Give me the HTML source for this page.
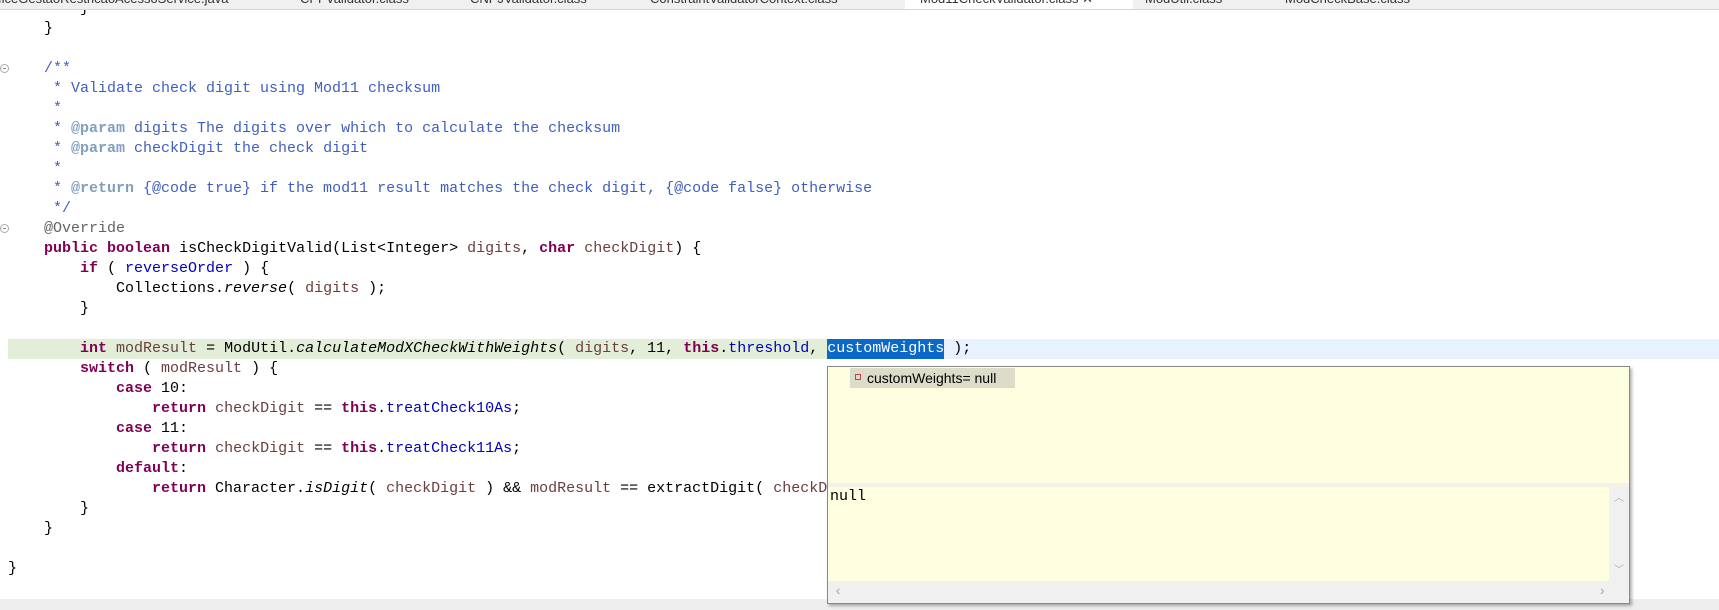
<!DOCTYPE html>
<html><head><meta charset="utf-8"><style>
body{margin:0;width:1719px;height:610px;background:#fff;position:relative;overflow:hidden;font-family:"Liberation Mono",monospace;font-size:15px;}
.tabs{position:absolute;left:0;top:0;width:1719px;height:9px;background:#f0f0f0;border-bottom:1px solid #d8d8d8;overflow:hidden;font-family:"Liberation Sans",sans-serif;font-size:13px;color:#333;z-index:2}
.tabs span{position:absolute;top:-9px;white-space:nowrap}
.l{position:absolute;left:8px;height:20px;line-height:20px;white-space:pre;color:#000}
.k{color:#7f0055;font-weight:bold}.c{color:#3f5fbf}.t{color:#7f9fbf;font-weight:bold}
.f{color:#0000c0}.v{color:#6a3e3e}.i{font-style:italic}.a{color:#646464}
.fold{position:absolute;left:0;width:7px;height:7px;border:1px solid #aaa;border-radius:50%}
.fold:after{content:"";position:absolute;left:2px;top:3px;width:3px;height:1px;background:#888}
</style></head><body>
<div class="tabs">
<span style="left:-2px">ficeGestaoRestricaoAcessoService.java</span>
<span style="left:300px">CPFValidator.class</span>
<span style="left:470px">CNPJValidator.class</span>
<span style="left:650px">ConstraintValidatorContext.class</span>
<div style="position:absolute;left:905px;top:0;width:228px;height:9px;background:#fff"></div>
<span style="left:920px">Mod11CheckValidator.class ✕</span>
<span style="left:1145px">ModUtil.class</span>
<span style="left:1285px">ModCheckBase.class</span>
</div>
<div class="fold" style="top:64px"></div>
<div class="fold" style="top:224px"></div>
<div style="position:absolute;left:8px;top:339px;width:819px;height:20px;background:#e2eed7"></div>
<div style="position:absolute;left:827px;top:339px;width:892px;height:20px;background:#e8f2fe"></div>
<div style="position:absolute;left:827px;top:339px;width:117px;height:20px;background:#0b68c9"></div>
<div class="l" style="top:-1px">        }</div>
<div class="l" style="top:19px">    }</div>
<div class="l c" style="top:59px">    /**</div>
<div class="l c" style="top:79px">     * Validate check digit using Mod11 checksum</div>
<div class="l c" style="top:99px">     *</div>
<div class="l c" style="top:119px">     * <span class="t">@param</span> digits The digits over which to calculate the checksum</div>
<div class="l c" style="top:139px">     * <span class="t">@param</span> checkDigit the check digit</div>
<div class="l c" style="top:159px">     *</div>
<div class="l c" style="top:179px">     * <span class="t">@return</span> {@code true} if the mod11 result matches the check digit, {@code false} otherwise</div>
<div class="l c" style="top:199px">     */</div>
<div class="l a" style="top:219px">    @Override</div>
<div class="l" style="top:239px">    <span class="k">public</span> <span class="k">boolean</span> isCheckDigitValid(List&lt;Integer&gt; <span class="v">digits</span>, <span class="k">char</span> <span class="v">checkDigit</span>) {</div>
<div class="l" style="top:259px">        <span class="k">if</span> ( <span class="f">reverseOrder</span> ) {</div>
<div class="l" style="top:279px">            Collections.<span class="i">reverse</span>( <span class="v">digits</span> );</div>
<div class="l" style="top:299px">        }</div>
<div class="l" style="top:339px">        <span class="k">int</span> <span class="v">modResult</span> = ModUtil.<span class="i">calculateModXCheckWithWeights</span>( <span class="v">digits</span>, 11, <span class="k">this</span>.<span class="f">threshold</span>, <span style="color:#fff">customWeights</span> );</div>
<div class="l" style="top:359px">        <span class="k">switch</span> ( <span class="v">modResult</span> ) {</div>
<div class="l" style="top:379px">            <span class="k">case</span> 10:</div>
<div class="l" style="top:399px">                <span class="k">return</span> <span class="v">checkDigit</span> == <span class="k">this</span>.<span class="f">treatCheck10As</span>;</div>
<div class="l" style="top:419px">            <span class="k">case</span> 11:</div>
<div class="l" style="top:439px">                <span class="k">return</span> <span class="v">checkDigit</span> == <span class="k">this</span>.<span class="f">treatCheck11As</span>;</div>
<div class="l" style="top:459px">            <span class="k">default</span>:</div>
<div class="l" style="top:479px">                <span class="k">return</span> Character.<span class="i">isDigit</span>( <span class="v">checkDigit</span> ) &amp;&amp; <span class="v">modResult</span> == extractDigit( <span class="v">checkD</span></div>
<div class="l" style="top:499px">        }</div>
<div class="l" style="top:519px">    }</div>
<div class="l" style="top:559px">}</div>
<div style="position:absolute;left:0;top:599px;width:1719px;height:11px;background:#eee"></div>
<div style="position:absolute;left:827px;top:366px;width:801px;height:236px;border:1px solid #888;background:#fefee0;box-shadow:2px 2px 3px rgba(0,0,0,.3)">
 <div style="position:absolute;left:22px;top:1px;width:165px;height:20px;background:#dcdcc8;font-family:'Liberation Sans',sans-serif;font-size:14px;line-height:20px;white-space:nowrap"><span style="display:inline-block;width:4px;height:4px;border:1px solid #c04050;margin:0 6px 0 5px;vertical-align:3px"></span>customWeights= null</div>
 <div style="position:absolute;left:0;top:116px;width:801px;height:4px;background:#f2f2ea"></div>
 <div style="position:absolute;left:2px;top:120px;line-height:20px">null</div>
 <div style="position:absolute;right:0;top:120px;width:20px;height:94px;background:#f0f0f0;color:#aaa;font-size:10px;text-align:center">
  <div style="position:absolute;top:2px;width:20px">︿</div><div style="position:absolute;bottom:4px;width:20px">﹀</div></div>
 <div style="position:absolute;left:0;bottom:0;width:801px;height:22px;background:#f0f0f0;color:#aaa;font-size:14px;line-height:22px"><span style="position:absolute;left:6px">‹</span><span style="position:absolute;left:770px">›</span></div>
</div>
</body></html>
